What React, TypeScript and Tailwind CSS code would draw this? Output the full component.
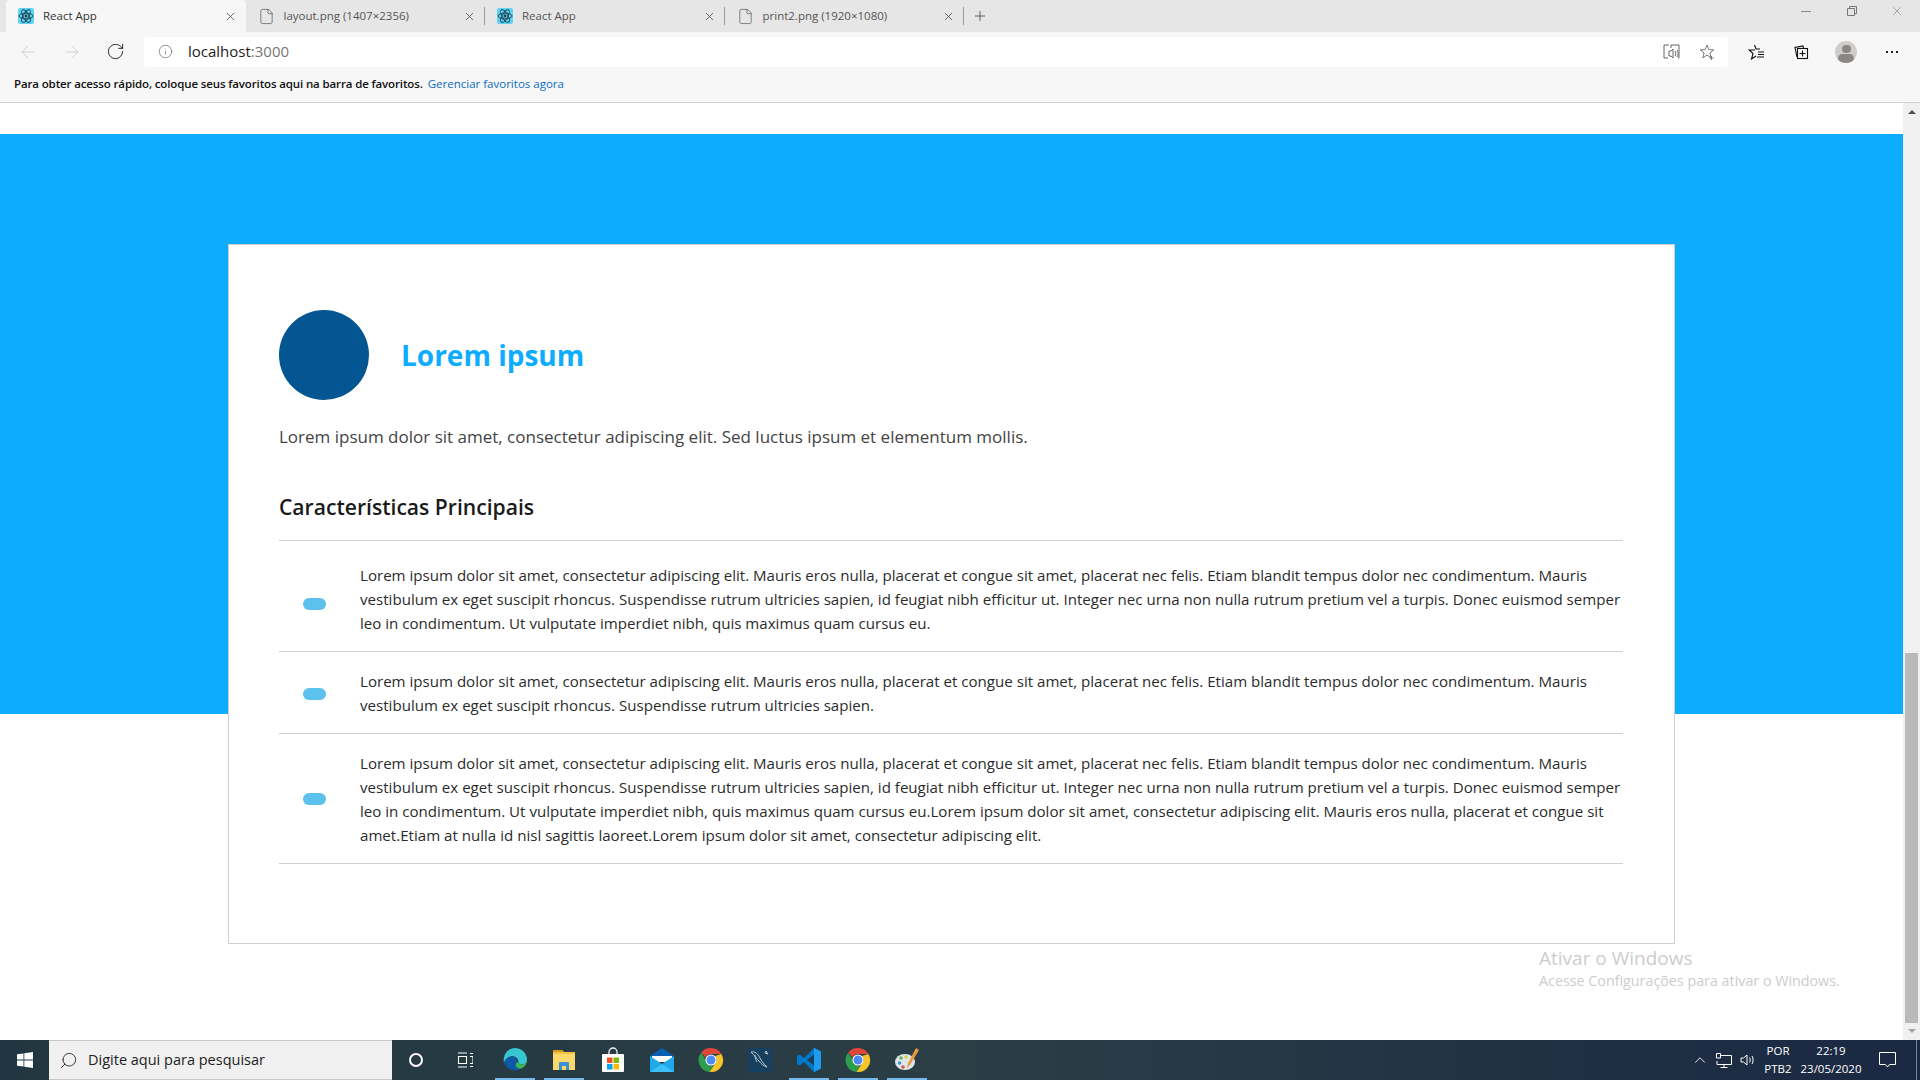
import { ArrowLeft, ArrowRight, RotateCw, Info, ChevronUp, X, Plus, Search, File } from "lucide-react";

const FONT = "font-['Open_Sans','Liberation_Sans',sans-serif]";

const rows = [
  {
    pad: "pt-[22px] pb-[16px]",
    pill: "mt-[9px]",
    lines: [
      "Lorem ipsum dolor sit amet, consectetur adipiscing elit. Mauris eros nulla, placerat et congue sit amet, placerat nec felis. Etiam blandit tempus dolor nec condimentum. Mauris",
      "vestibulum ex eget suscipit rhoncus. Suspendisse rutrum ultricies sapien, id feugiat nibh efficitur ut. Integer nec urna non nulla rutrum pretium vel a turpis. Donec euismod semper",
      "leo in condimentum. Ut vulputate imperdiet nibh, quis maximus quam cursus eu.",
    ],
  },
  {
    pad: "pt-[17px] pb-[16px]",
    pill: "mt-[2px]",
    lines: [
      "Lorem ipsum dolor sit amet, consectetur adipiscing elit. Mauris eros nulla, placerat et congue sit amet, placerat nec felis. Etiam blandit tempus dolor nec condimentum. Mauris",
      "vestibulum ex eget suscipit rhoncus. Suspendisse rutrum ultricies sapien.",
    ],
  },
  {
    pad: "pt-[17px] pb-[16px]",
    pill: "mt-0",
    lines: [
      "Lorem ipsum dolor sit amet, consectetur adipiscing elit. Mauris eros nulla, placerat et congue sit amet, placerat nec felis. Etiam blandit tempus dolor nec condimentum. Mauris",
      "vestibulum ex eget suscipit rhoncus. Suspendisse rutrum ultricies sapien, id feugiat nibh efficitur ut. Integer nec urna non nulla rutrum pretium vel a turpis. Donec euismod semper",
      "leo in condimentum. Ut vulputate imperdiet nibh, quis maximus quam cursus eu.Lorem ipsum dolor sit amet, consectetur adipiscing elit. Mauris eros nulla, placerat et congue sit",
      "amet.Etiam at nulla id nisl sagittis laoreet.Lorem ipsum dolor sit amet, consectetur adipiscing elit.",
    ],
  },
];

function ReactIcon() {
  return (
    <svg width="16" height="16" viewBox="0 0 16 16" className="shrink-0">
      <rect width="16" height="16" rx="2" fill="#5fd3f3" />
      <g fill="none" stroke="#1d3d4a" strokeWidth="0.9">
        <ellipse cx="8" cy="8" rx="7" ry="2.8" />
        <ellipse cx="8" cy="8" rx="7" ry="2.8" transform="rotate(60 8 8)" />
        <ellipse cx="8" cy="8" rx="7" ry="2.8" transform="rotate(120 8 8)" />
      </g>
      <circle cx="8" cy="8" r="1.4" fill="#1d3d4a" />
    </svg>
  );
}

function Tab({ title, active, react, sep }: { title: string; active?: boolean; react?: boolean; sep?: boolean }) {
  return (
    <div className={`relative flex h-8 w-[239.5px] shrink-0 items-center pl-3 pr-[9px] ${active ? "rounded-t-[4px] bg-[#f7f7f7] text-[#333]" : "text-[#555]"}`}>
      {react ? <ReactIcon /> : <File size={17} strokeWidth={1} className="shrink-0 text-[#555]" />}
      <span className="ml-[9px] flex-1 text-[11.5px] whitespace-nowrap">{title}</span>
      <X size={13} strokeWidth={1.4} className="text-[#444]" />
      {sep && <span className="absolute top-[7px] right-0 h-[18px] w-px bg-[#9a9a9a]" />}
    </div>
  );
}

function Chrome() {
  return (
    <svg width="28" height="28" viewBox="0 0 28 28">
      <path d="M14 2a12 12 0 0 1 10.4 6H14a6 6 0 0 0-5.5 3.5L4.3 6.4A12 12 0 0 1 14 2z" fill="#e2463a" />
      <path d="M4.3 6.4l5.2 9A6 6 0 0 0 16 19.7L12.6 26A12 12 0 0 1 4.3 6.4z" fill="#2c9e4b" />
      <path d="M24.4 8A12 12 0 0 1 12.6 26l5.3-8.5A6 6 0 0 0 18 10z" fill="#f7c428" />
      <circle cx="14" cy="14" r="5.6" fill="#fff" />
      <circle cx="14" cy="14" r="4.5" fill="#4c8bf5" />
    </svg>
  );
}

const taskIcons = [
  {
    on: true,
    icon: (
      <svg width="26" height="26" viewBox="0 0 26 26">
        <path d="M13 1a12 12 0 0 1 12 12c0 3-2.6 4.5-5 4.5-2.4 0-3.6-1-3.6-2.4C16.400 11.500 13 8.500 9 9.400 5 10.300 2.500 14 2 16 0.300 8 6 1 13 1z" fill="#37c6d0" />
        <path d="M2 16c.5-3 3.400-6.300 7-6.600 3.500-.3 6 2 6 4.300 0 2-1.500 3-1.200 5 .3 2 2.500 3.300 5.700 2.800A12 12 0 0 1 2 16z" fill="#0c59a4" />
        <path d="M16.400 15.100c0 1.400 1.200 2.400 3.600 2.400 2.400 0 5-1.500 5-4.500 0 4-2.300 7-5.500 8.500-3.200.5-5.400-.8-5.700-2.800-.2-1.300.3-2.200.7-3.100z" fill="#3cb45a" />
      </svg>
    ),
  },
  {
    on: true,
    icon: (
      <svg width="24" height="22" viewBox="0 0 24 22">
        <path d="M1 1h9l2 2h11v18H1z" fill="#f6c244" />
        <path d="M1 1h9l2 2H1z" fill="#d79b1c" />
        <rect x="1" y="5" width="22" height="16" fill="#fcd96b" />
        <path d="M7 21v-7a1 1 0 0 1 1-1h8a1 1 0 0 1 1 1v7h-3v-4h-4v4z" fill="#3a8fd6" />
      </svg>
    ),
  },
  {
    icon: (
      <svg width="24" height="26" viewBox="0 0 24 26">
        <path d="M8 7V5a4 4 0 0 1 8 0v2" fill="none" stroke="#eee" strokeWidth="1.3" />
        <rect x="1" y="7" width="22" height="18" rx="1" fill="#fff" />
        <rect x="6" y="10.500" width="5.500" height="5.500" fill="#f25022" />
        <rect x="12.500" y="10.500" width="5.500" height="5.500" fill="#7fba00" />
        <rect x="6" y="17" width="5.500" height="5.500" fill="#00a4ef" />
        <rect x="12.500" y="17" width="5.500" height="5.500" fill="#ffb900" />
      </svg>
    ),
  },
  {
    icon: (
      <svg width="24" height="24" viewBox="0 0 24 24">
        <path d="M0 8 12 0l12 8v3H0z" fill="#0a5fb4" />
        <path d="M2 8h20v6H2z" fill="#fff" />
        <path d="M0 8l12 8 12-8v16H0z" fill="#1fa8ea" />
        <path d="M0 24l12-8 12 8z" fill="#3dc0f5" />
      </svg>
    ),
  },
  { icon: <Chrome /> },
  {
    icon: (
      <svg width="24" height="24" viewBox="0 0 24 24">
        <rect width="24" height="24" rx="3" fill="#17405f" />
        <path d="M3 4c4-1 7 2 9 6 1.500 3 3 5 7 9-3-1-6-3-8-6-2-2-4-5-8-9zM7 7c0 3 1 5 2 7M18 3l2 3-3-1z" fill="none" stroke="#c9d6df" strokeWidth="0.9" />
      </svg>
    ),
  },
  {
    on: true,
    icon: (
      <svg width="24" height="26" viewBox="0 0 24 26">
        <path d="M17 1l7 3.500v17L17 25 7 15l-4 3.500L0 17v-8l3-1.500 4 3.500z" fill="#0078c8" />
        <path d="M17 7.500 10 13l7 5.500z" fill="#23282d" opacity="0.75" />
        <path d="M17 1l7 3.500v17L17 25z" fill="#1f9cf0" />
      </svg>
    ),
  },
  { on: true, icon: <Chrome /> },
  {
    on: true,
    icon: (
      <svg width="26" height="26" viewBox="0 0 26 26">
        <ellipse cx="11" cy="15" rx="10" ry="8" fill="#dfe6ea" />
        <circle cx="7" cy="11" r="1.800" fill="#5db35d" />
        <circle cx="12" cy="10" r="1.800" fill="#e6c84a" />
        <circle cx="5.500" cy="16" r="1.800" fill="#4a90d9" />
        <circle cx="9" cy="20" r="1.800" fill="#d9534f" />
        <path d="M22 1l3 2-9 15-3 3 1-5z" fill="#e59a3c" />
      </svg>
    ),
  },
];

export default function App() {
  return (
    <div className={`flex h-[1080px] w-[1920px] flex-col overflow-hidden bg-white ${FONT}`}>
      {/* tabs */}
      <div className="flex h-8 shrink-0 items-center bg-[#e6e6e6] pl-[6px]">
        <Tab title="React App" active react />
        <Tab title="layout.png (1407×2356)" sep />
        <Tab title="React App" react sep />
        <Tab title="print2.png (1920×1080)" sep />
        <Plus size={16} strokeWidth={1.2} className="ml-[8px] text-[#444]" />
        <div className="ml-auto flex items-center pb-[10px] text-[#777]">
          <span className="block h-px w-[10px] bg-[#888]" />
          <svg width="10" height="10" viewBox="0 0 10 10" fill="none" stroke="#777" strokeWidth="1" className="ml-[36px]">
            <path d="M.5 2.500h7v7h-7zM2.500 2.500v-2h7v7h-2" />
          </svg>
          <X size={14} strokeWidth={1} className="mr-[16px] ml-[33px]" />
        </div>
      </div>

      {/* toolbar */}
      <div className="flex h-[40px] shrink-0 items-center bg-[#f7f7f7] pl-[18px] pb-[1px]">
        <ArrowLeft size={20} strokeWidth={1} className="text-[#c8c8c8]" />
        <ArrowRight size={20} strokeWidth={1} className="ml-6 text-[#c8c8c8]" />
        <RotateCw size={19} strokeWidth={1.2} className="ml-6 text-[#222]" />
        <div className="ml-[19px] flex h-[30px] w-[1584px] items-center rounded-[3px] bg-white pl-[14px] pr-[12px]">
          <Info size={15} strokeWidth={1} className="text-[#555]" />
          <span className="ml-[15px] text-[15px] text-[#222]">localhost<span className="text-[#777]">:3000</span></span>
          <svg width="17" height="16" viewBox="0 0 17 16" className="ml-auto" fill="none" stroke="#666" strokeWidth="1">
            <path d="M6 1H1v13h4M8 1h8v13h-1M8 1v3" />
            <path d="M6 7h2l2-2v9l-2-2H6zM12 7c1 1 1 4 0 5M14 6c1.500 2 1.500 5 0 7" />
          </svg>
          <svg width="16" height="16" viewBox="0 0 16 16" fill="none" stroke="#777" strokeWidth="1" className="ml-[20px]">
            <path d="M7 1l1.800 4.600 5 .3-3.900 3.100 1.300 4.800L7 11.100l-4.200 2.700 1.300-4.800L.2 5.900l5-.3zM11.500 12v4M9.500 14h4" />
          </svg>
        </div>
        <svg width="17" height="16" viewBox="0 0 17 16" fill="none" stroke="#111" strokeWidth="1.100" className="ml-[20px]">
          <path d="M6.500 1l1.500 4H12M7 6H1l4 3.500L3.500 15 8 12M10 8h6M10 10.500h6M9 13h7" />
        </svg>
        <svg width="16" height="16" viewBox="0 0 16 16" className="ml-[28px]" fill="none" stroke="#111" strokeWidth="1.100">
          <rect x="4.500" y="4.500" width="10" height="10" />
          <path d="M9.500 6.500v6M6.500 9.500h6M4 13 2 3.500l8-1.500.5 2" />
        </svg>
        <span className="ml-[26px] flex h-[22px] w-[22px] flex-col items-center overflow-hidden rounded-full bg-[#cfccca]">
          <span className="mt-[4px] h-[9px] w-[9px] rounded-full bg-[#8b8784]" />
          <span className="mt-[1px] h-[10px] w-[16px] rounded-full bg-[#8b8784]" />
        </span>
        <span className="ml-[29px] flex gap-[3px]">
          <i className="h-[2px] w-[2px] bg-[#222]" />
          <i className="h-[2px] w-[2px] bg-[#222]" />
          <i className="h-[2px] w-[2px] bg-[#222]" />
        </span>
      </div>

      {/* favourites bar */}
      <div className="flex h-[31px] shrink-0 items-center border-b border-[#d0d0d0] bg-[#f7f7f7] pb-[7px] pl-[14px] text-[11.5px]">
        <span className="font-semibold tracking-[-0.13px] text-[#111]">Para obter acesso rápido, coloque seus favoritos aqui na barra de favoritos.</span>
        <span className="ml-[5px] text-[#0a6cc4]">Gerenciar favoritos agora</span>
      </div>

      {/* page */}
      <div className="relative flex min-h-0 flex-1">
        <div className="min-w-0 flex-1 pt-[31px]">
          <div className="h-[580px] bg-[#0dacff] pt-[110px]">
            <div className="relative ml-[228px] h-[700px] w-[1447px] border border-[#cfcfcf] bg-white pt-[65px] pr-[51px] pl-[50px]">
              <div className="flex items-center">
                <div className="h-[90px] w-[90px] rounded-full bg-[#045692]" />
                <h1 className="ml-[32px] text-[28px] font-bold text-[#0dacff]">Lorem ipsum</h1>
              </div>
              <p className="mt-[23px] text-[17px] leading-[28px] text-[#444]">
                Lorem ipsum dolor sit amet, consectetur adipiscing elit. Sed luctus ipsum et elementum mollis.
              </p>
              <h2 className="mt-[41px] text-[21.1px] leading-[30px] font-semibold text-[#1a1a1a]">Características Principais</h2>
              <div className="mt-[18px] border-t border-[#cfcfcf]">
                {rows.map((row, i) => (
                  <div key={i} className={`flex items-center border-b border-[#cfcfcf] ${row.pad}`}>
                    <span className={`ml-[24px] h-[12px] w-[23px] shrink-0 rounded-full bg-[#5cc1ec] ${row.pill}`} />
                    <p className="ml-[34px] text-[15.1px] leading-[24px] whitespace-nowrap text-[#2b2b2b]">
                      {row.lines.map((line, j) => (
                        <span key={j} className="block">{line}</span>
                      ))}
                    </p>
                  </div>
                ))}
              </div>
            </div>
          </div>
        </div>

        {/* scrollbar */}
        <div className="flex w-[17px] shrink-0 flex-col items-center bg-[#f0f0f0]">
          <span className="mt-[7px] h-0 w-0 border-x-[4px] border-b-[4px] border-x-transparent border-b-[#505050]" />
          <div className="mt-[539px] h-[370px] w-[13px] bg-[#b9b9b9]" />
          <span className="mt-[6px] h-0 w-0 border-x-[4px] border-t-[4px] border-x-transparent border-t-[#a3a3a3]" />
        </div>

        {/* activation watermark */}
        <div className="absolute top-[842px] left-[1539px] text-[#cdcdcd]">
          <div className="text-[19px] leading-[26px]">Ativar o Windows</div>
          <div className="text-[14.3px] leading-[20px]">Acesse Configurações para ativar o Windows.</div>
        </div>
      </div>

      {/* taskbar */}
      <div className="flex h-10 shrink-0 items-center bg-gradient-to-r from-[#213640] via-[#2b3e46] to-[#1a2842] text-white">
        <div className="flex h-10 w-[49px] items-center justify-center">
          <svg width="16" height="16" viewBox="0 0 16 16" fill="#fff">
            <path d="M0 2.300 6.500 1.400v6.200H0zM7.300 1.300 16 0v7.600H7.300zM0 8.400h6.500v6.200L0 13.700zM7.300 8.400H16V16l-8.700-1.300z" />
          </svg>
        </div>
        <div className="flex h-10 w-[343px] items-center border-y border-[#c8c8c8] bg-[#f0f0f0] pl-[10px] text-[#222]">
          <Search size={19} strokeWidth={1.1} className="-scale-x-100" />
          <span className="ml-[10px] text-[14.5px]">Digite aqui para pesquisar</span>
        </div>
        <div className="flex w-[48px] justify-center">
          <span className="h-[14px] w-[14px] rounded-full border-2 border-white" />
        </div>
        <div className="flex w-[50px] justify-center">
          <svg width="16" height="16" viewBox="0 0 16 16" fill="none" stroke="#fff" strokeWidth="1.100">
            <path d="M1 1h9M1 15h9M1.500 4.500h8v7h-8zM13 1.500h3M13 4.500h3v7h-3M13 14.500h3" />
          </svg>
        </div>
        {taskIcons.map((t, i) => (
          <div key={i} className="relative flex h-10 w-[49px] items-center justify-center">
            {t.icon}
            {t.on && <span className="absolute right-[4px] bottom-0 left-[5px] h-[2px] bg-[#76b9ed]" />}
          </div>
        ))}

        <div className="ml-auto flex items-center">
          <ChevronUp size={18} strokeWidth={1.2} className="mr-[7px]" />
          <svg width="16" height="15" viewBox="0 0 16 15" fill="none" stroke="#fff" strokeWidth="1">
            <path d="M5 2.500h10.500v9H1V8M8 11.500v2.500M4.500 14.500h7M.5.500h4v4.500h-4z" />
          </svg>
          <svg width="15" height="14" viewBox="0 0 15 14" fill="none" stroke="#fff" strokeWidth="1" className="ml-[8px]">
            <path d="M1 5h2.500L7 2v10L3.500 9H1zM9.500 4.500c1 1.500 1 3.500 0 5M12 3c1.500 2.500 1.500 5.500 0 8" />
          </svg>
          <div className="ml-[9px] flex w-[28px] flex-col items-center text-[11.5px] leading-[18px]">
            <span>POR</span>
            <span>PTB2</span>
          </div>
          <div className="ml-[9px] flex w-[60px] flex-col items-center text-[11.5px] leading-[18px]">
            <span>22:19</span>
            <span>23/05/2020</span>
          </div>
          <svg width="17" height="16" viewBox="0 0 17 16" fill="none" stroke="#fff" strokeWidth="1" className="ml-[18px]">
            <path d="M.5.500h16v12h-6l-2 2.500-2-2.500h-6z" />
          </svg>
          <span className="ml-[20px] h-10 w-px bg-[#7a8593]" />
          <span className="w-[3px]" />
        </div>
      </div>
    </div>
  );
}
